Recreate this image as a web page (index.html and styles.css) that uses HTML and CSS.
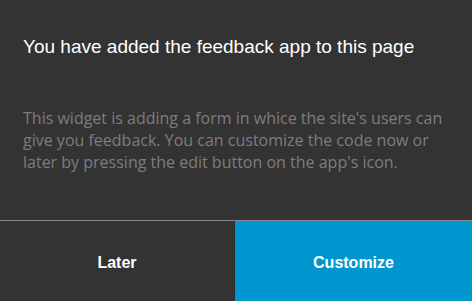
FILE: index.html
```html
<!DOCTYPE html>
<html lang="en">
<head>
    <meta charset="UTF-8" />
    <title>Feedback app added</title>
    <link rel="stylesheet" href="styles.css">
</head>
<body>
    <div class="dialog">
        <div class="dialog-body">
            <h2 class="dialog-title">You have added the feedback app to this page</h2>
            <p class="dialog-text">This widget is adding a form in whice the site's users can give you feedback. You can customize the code now or later by pressing the edit button on the app's icon.</p>
        </div>
        <div class="dialog-actions">
            <button class="btn btn-later">Later</button>
            <button class="btn btn-customize">Customize</button>
        </div>
    </div>
</body>
</html>
```

FILE: styles.css
```css
* {
    margin: 0;
    padding: 0;
    box-sizing: border-box;
}

html, body {
    width: 472px;
    height: 301px;
    background: #333333;
    overflow: hidden;
}

.dialog {
    display: flex;
    flex-direction: column;
    height: 301px;
}

.dialog-body {
    flex: 1;
    padding: 35px 23px 0 23px;
}

.dialog-title {
    font-family: "Liberation Sans", Arial, sans-serif;
    font-weight: normal;
    font-size: 19px;
    line-height: 24px;
    color: #ffffff;
}

.dialog-text {
    margin-top: 48px;
    max-width: 422px;
    font-family: "Open Sans", sans-serif;
    font-size: 16px;
    line-height: 22px;
    color: #7d7d7d;
}

.dialog-actions {
    display: flex;
    height: 81px;
    border-top: 1px solid #8a8a8a;
}

.btn {
    border: none;
    padding-top: 4px;
    font-family: "Liberation Sans", Arial, sans-serif;
    font-weight: bold;
    font-size: 16px;
    color: #ffffff;
    cursor: pointer;
}

.btn-later {
    width: 235px;
    background: #333333;
    border-right: 1px solid #2a2a2a;
}

.btn-customize {
    flex: 1;
    background: #0097d0;
}
```
